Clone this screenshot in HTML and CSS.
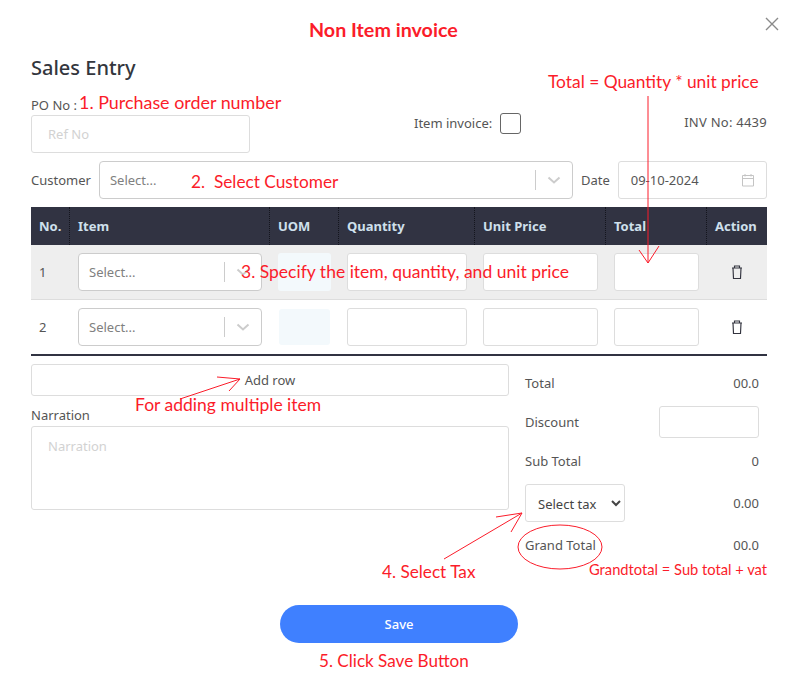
FILE: index.html
```html
<!DOCTYPE html>
<html lang="en">
<head>
<meta charset="utf-8">
<title>Sales Entry</title>
<link rel="stylesheet" href="styles.css">
</head>
<body>
<main class="modal">
  <button class="close" aria-label="Close"><svg width="14" height="14" viewBox="0 0 14 14"><path d="M1 1l12 12M13 1L1 13" fill="none" stroke="#8a8a8a" stroke-width="1.4"/></svg></button>
  <h1 class="title">Sales Entry</h1>
  <div class="top-row">
    <div class="po">
      <label class="field-label">PO No :</label>
      <input class="input po-input" placeholder="Ref No">
    </div>
    <div class="item-invoice"><span>Item invoice:</span><input type="checkbox" class="check"></div>
    <div class="inv-no">INV No: 4439</div>
  </div>
  <div class="customer-row">
    <span class="field-label">Customer</span>
    <div class="select customer-select"><span class="select-text">Select...</span><span class="select-sep"></span><svg class="chev" width="14" height="8" viewBox="0 0 14 8"><path d="M1.5 1.5L7 6.5l5.5-5" fill="none" stroke="#ccc" stroke-width="2"/></svg></div>
    <span class="field-label">Date</span>
    <div class="date"><span>09-10-2024</span><svg width="14" height="14" viewBox="0 0 14 14"><path d="M1.5 2.5h11v10.5h-11zM1.5 5.5h11M4 1v2.5M10 1v2.5" fill="none" stroke="#c4c4c4" stroke-width="1"/></svg></div>
  </div>
  <table class="grid">
    <colgroup><col class="c-no"><col class="c-item"><col class="c-uom"><col class="c-qty"><col class="c-price"><col class="c-total"><col class="c-action"></colgroup>
    <thead><tr><th>No.</th><th>Item</th><th>UOM</th><th>Quantity</th><th>Unit Price</th><th>Total</th><th>Action</th></tr></thead>
    <tbody>
      <tr class="alt">
        <td>1</td>
        <td><div class="select"><span class="select-text">Select...</span><span class="select-sep"></span><svg class="chev" width="14" height="8" viewBox="0 0 14 8"><path d="M1.5 1.5L7 6.5l5.5-5" fill="none" stroke="#ccc" stroke-width="2"/></svg></div></td>
        <td><div class="uom uom-first"></div></td>
        <td><input class="input"></td><td><input class="input"></td><td><input class="input"></td>
        <td class="act"><svg width="12" height="14" viewBox="0 0 12 14"><path d="M1 3h10M3.5 3V1h5v2M2 3l.5 10.5h7L10 3" fill="none" stroke="#33343f" stroke-width="1.15"/></svg></td>
      </tr>
      <tr class="last">
        <td>2</td>
        <td><div class="select"><span class="select-text">Select...</span><span class="select-sep"></span><svg class="chev" width="14" height="8" viewBox="0 0 14 8"><path d="M1.5 1.5L7 6.5l5.5-5" fill="none" stroke="#ccc" stroke-width="2"/></svg></div></td>
        <td><div class="uom"></div></td>
        <td><input class="input"></td><td><input class="input"></td><td><input class="input"></td>
        <td class="act"><svg width="12" height="14" viewBox="0 0 12 14"><path d="M1 3h10M3.5 3V1h5v2M2 3l.5 10.5h7L10 3" fill="none" stroke="#33343f" stroke-width="1.15"/></svg></td>
      </tr>
    </tbody>
  </table>
  <div class="bottom">
    <div class="left">
      <button class="add-row">Add row</button>
      <label class="narr-label">Narration</label>
      <textarea class="narr" placeholder="Narration"></textarea>
    </div>
    <div class="right">
      <div class="sum sum-tall"><span>Total</span><span>00.0</span></div>
      <div class="sum"><span>Discount</span><input class="input discount"></div>
      <div class="sum sum-tall"><span>Sub Total</span><span>0</span></div>
      <div class="sum sum-tall"><select class="tax"><option>Select tax</option></select><span>0.00</span></div>
      <div class="sum sum-tall grey"><span>Grand Total</span><span>00.0</span></div>
    </div>
  </div>
  <div class="actions"><button class="save">Save</button></div>
</main>

<svg class="marks" width="794" height="688" viewBox="0 0 794 688" aria-hidden="true">
  <g fill="none" stroke="#fb1c2a" stroke-width="1">
    <path d="M648 96V263M639 250l9 13 11-17"/>
    <path d="M180 399L240 379M217 377l23 2-11 12"/>
    <path d="M444 559L522 513M496 517l26-4-11 19"/>
    <ellipse cx="560" cy="547" rx="42" ry="22"/>
  </g>
</svg>
<div class="note note-head">Non Item invoice</div>
<div class="note note-total">Total = Quantity * unit price</div>
<div class="note note-1">1. Purchase order number</div>
<div class="note note-2">2.&nbsp; Select Customer</div>
<div class="note note-3">3. Specify the item, quantity, and unit price</div>
<div class="note note-add">For adding multiple item</div>
<div class="note note-4">4. Select Tax</div>
<div class="note note-grand">Grandtotal = Sub total + vat</div>
<div class="note note-5">5. Click Save Button</div>
</body>
</html>
```
FILE: styles.css
```css
* { box-sizing: border-box; }
html, body { margin: 0; padding: 0; background: #fff; }
body {
  width: 794px;
  height: 688px;
  position: relative;
  overflow: hidden;
  font-family: "Noto Sans", sans-serif;
  font-size: 13px;
  color: #555;
}
.modal { width: 794px; padding: 56px 27px 0 31px; }
.close { position: absolute; left: 765px; top: 17px; width: 14px; height: 14px; padding: 0; border: 0; background: none; line-height: 0; }
.title { margin: 0 0 15px; font-size: 20px; line-height: 24px; font-weight: 500; color: #33363d; }
.top-row { display: flex; height: 58px; }
.po { width: 219px; }
.field-label { line-height: 19px; white-space: nowrap; color: #555; }
.po .field-label { display: block; line-height: 20px; }
.input {
  display: block;
  width: 100%;
  height: 38px;
  padding: 0 16px;
  border: 1px solid #ddd;
  border-radius: 3px;
  background: #fff;
  font: inherit;
  outline: 0;
}
.input::placeholder, .narr::placeholder { color: #d2d2d2; opacity: 1; }
.item-invoice { display: flex; align-items: center; gap: 8px; height: 21px; margin: 18px 0 0 164px; }
.item-invoice span { position: relative; top: -1px; }
.check { appearance: none; width: 21px; height: 21px; margin: 0; border: 1px solid #666; border-radius: 3px; background: #fff; }
.inv-no { margin: 19px 0 0 auto; line-height: 17px; letter-spacing: 0.25px; }
.customer-row { display: flex; align-items: center; height: 38px; margin: 8px 0; gap: 8px; }
.select {
  display: flex;
  align-items: center;
  height: 38px;
  padding-left: 10px;
  border: 1px solid #ccc;
  border-radius: 4px;
  background: #fff;
}
.customer-select { width: 474px; }
.select-text { flex: 1; color: #808080; }
.select-sep { width: 1px; height: 20px; background: #ccc; }
.chev { margin: 0 11px 0 11px; }
.date { display: flex; align-items: center; justify-content: space-between; width: 149px; height: 38px; padding: 0 11px 0 12px; border: 1px solid #ddd; border-radius: 3px; }
.grid { width: 736px; table-layout: fixed; border-collapse: separate; border-spacing: 0; }
.c-no { width: 39px; } .c-item { width: 200px; } .c-uom { width: 69px; } .c-qty { width: 136px; }
.c-price { width: 131px; } .c-total { width: 101px; } .c-action { width: 60px; }
th {
  height: 38px;
  padding: 0 0 0 8px;
  border-right: 1px dotted #14151d;
  background: #313342;
  color: #cfe0ec;
  font-size: 13px;
  font-weight: 700;
  text-align: left;
  white-space: nowrap;
}
th:last-child { border-right: 0; }
td { height: 54px; padding: 8px; color: #555; }
td:first-child { padding-right: 0; }
.alt td { background: #eee; border-bottom: 1px solid #ddd; }
.last td { border-bottom: 2px solid #313342; }
.uom { height: 38px; border-radius: 3px; background: #f3f9fc; }
.last .uom { margin: 0 1px; height: 36px; }
.act { text-align: center; padding: 0; line-height: 0; }
.bottom { display: flex; gap: 16px; margin-top: 8px; }
.left { width: 478px; }
.add-row { display: block; width: 100%; height: 32px; border: 1px solid #ddd; border-radius: 3px; background: #fff; font: inherit; color: #555; }
.narr-label { display: block; margin-top: 9px; line-height: 20px; }
.narr { display: block; width: 100%; height: 84px; margin-top: 1px; padding: 10px 16px; border: 1px solid #ddd; border-radius: 3px; font: inherit; resize: none; outline: 0; }
.right { display: flex; flex-direction: column; gap: 4px; width: 234px; }
.sum { display: flex; align-items: center; justify-content: space-between; height: 32px; }
.sum-tall { height: 38px; }
.discount { width: 100px; height: 32px; }
.tax { width: 100px; height: 38px; padding: 2px 0 0 8px; border: 1px solid #ddd; border-radius: 3px; background: #fff; font: inherit; color: #444; }
.actions { display: flex; justify-content: center; margin-top: 41px; }
.save { width: 238px; height: 38px; border: 0; border-radius: 19px; background: #3f80ff; color: #fff; font: inherit; font-weight: 500; }
.marks { position: absolute; left: 0; top: 0; pointer-events: none; }
.note { position: absolute; font-family: Lato, sans-serif; font-size: 17.5px; line-height: 22px; color: #fb1c2a; white-space: nowrap; }
.note-head { left: 309px; top: 19px; font-size: 19.7px; font-weight: 700; }
.note-total { left: 548px; top: 71px; font-size: 17.35px; }
.note-1 { left: 79px; top: 91px; font-size: 17.9px; }
.note-2 { left: 191px; top: 171px; font-size: 17.25px; }
.note-3 { left: 241px; top: 261px; }
.note-add { left: 135px; top: 394px; }
.note-4 { left: 382px; top: 561px; font-size: 17.2px; }
.note-grand { left: 589px; top: 558px; font-size: 14.7px; }
.note-5 { left: 319px; top: 650px; font-size: 17.1px; }
```
